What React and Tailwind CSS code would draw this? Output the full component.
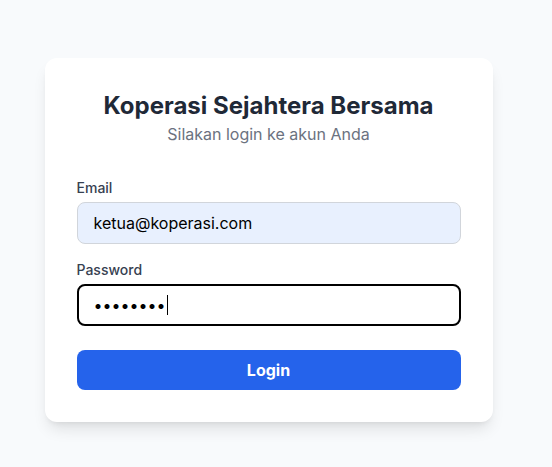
export default function App() {
  return (
    <div
      className="flex min-h-screen justify-center bg-[#f8fafc] pt-[58px] pr-[15px]"
      style={{ fontFamily: 'Inter, "Noto Sans", sans-serif' }}
    >
      <div className="h-fit w-[448px] rounded-xl bg-white p-8 shadow-lg">
        <div className="mb-8 text-center">
          <h1 className="text-2xl font-bold text-[#1f2937]">Koperasi Sejahtera Bersama</h1>
          <p className="text-base text-[#6b7280]">Silakan login ke akun Anda</p>
        </div>

        <form onSubmit={(e) => e.preventDefault()}>
          <div className="mb-4">
            <label className="mb-1 block text-sm font-medium text-[#374151]">Email</label>
            <input
              className="block h-[42px] w-full rounded-lg border border-[#d1d5db] bg-[#e8f0fe] px-4 text-base text-black outline-none"
              defaultValue="ketua@koperasi.com"
              readOnly
              type="email"
            />
          </div>

          <div>
            <label className="mb-1 block text-sm font-medium text-[#374151]">Password</label>
            <div className="flex h-[42px] w-full items-center rounded-lg border-2 border-black bg-white px-[15px] text-base text-black">
              <span>••••••••</span>
              <span className="ml-[1px] h-[20px] w-px bg-black" />
            </div>
          </div>

          <button
            className="mt-6 h-10 w-full rounded-lg bg-[#2563eb] text-base font-bold text-white"
            type="submit"
          >
            Login
          </button>
        </form>
      </div>
    </div>
  );
}
